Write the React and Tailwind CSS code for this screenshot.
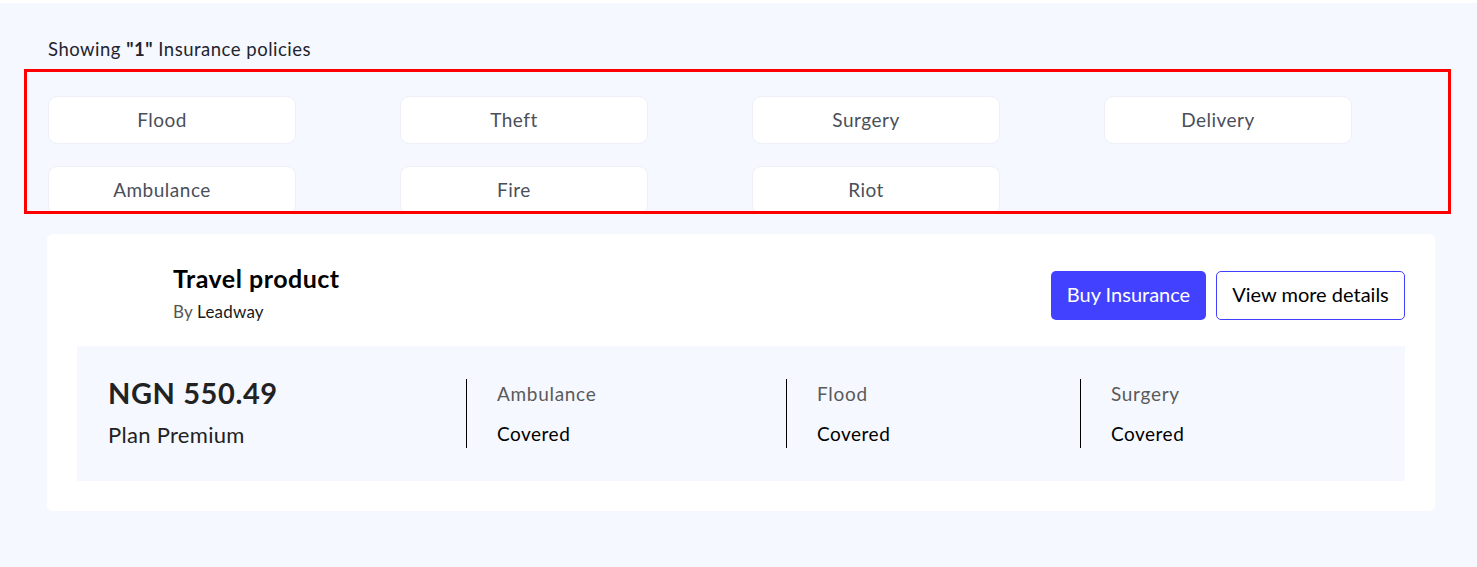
export default function App() {
  const chips = ["Flood", "Theft", "Surgery", "Delivery", "Ambulance", "Fire", "Riot"];
  const covers = [
    { name: "Ambulance", w: "w-[320px]" },
    { name: "Flood", w: "w-[294px]" },
    { name: "Surgery", w: "w-[294px]" },
  ];
  return (
    <div
      className="min-h-[567px] bg-[#f5f8fe] border-t-[3px] border-white"
      style={{ fontFamily: "Lato, 'Noto Sans', sans-serif" }}
    >
      <p className="ml-[48px] mt-[34px] text-[18.5px] leading-[24px] tracking-[0.5px] text-[#1f2430]">
        Showing <span className="font-bold">"1"</span> Insurance policies
      </p>

      <div className="ml-[24px] mt-[8px] w-[1427px] h-[145px] border-[3px] border-[#ff0000] overflow-hidden pl-[21px] pt-[24px]">
        <div className="grid grid-cols-[repeat(4,248px)] gap-x-[104px] gap-y-[22px]">
          {chips.map((c) => (
            <div
              key={c}
              className="h-[48px] bg-white rounded-[9px] border border-[#edf0f6] flex items-center justify-center pr-[20px] text-[19px] tracking-[0.5px] text-[#4a4f5a]"
            >
              {c}
            </div>
          ))}
        </div>
      </div>

      <div className="ml-[47px] mt-[20px] w-[1388px] bg-white rounded-[6px] px-[30px] pt-[29px] pb-[30px]">
        <div className="flex items-start justify-between">
          <div className="ml-[96px]">
            <div className="text-[25px] leading-[30px] font-bold tracking-[0.5px] text-black">Travel product</div>
            <div className="mt-[7px] text-[17px] leading-[24px] tracking-[0.2px] text-[#555]">
              By <span className="text-[#1a1a1a]">Leadway</span>
            </div>
          </div>
          <div className="mt-[8px] flex gap-[10px]">
            <button className="h-[49px] w-[155px] rounded-[5px] bg-[#4141ff] text-white text-[20px] pb-[3px]">
              Buy Insurance
            </button>
            <button className="h-[49px] w-[189px] rounded-[5px] border border-[#4141ff] bg-white text-black text-[20px] pb-[3px]">
              View more details
            </button>
          </div>
        </div>

        <div className="mt-[22px] bg-[#f5f8fe] pl-[31px] py-[33px] flex">
          <div className="w-[358px] h-[69px]">
            <div className="-mt-[3px] text-[29px] leading-[34px] font-bold tracking-[0.6px] text-[#222]">NGN 550.49</div>
            <div className="mt-[12px] text-[22px] leading-[26px] tracking-[0.3px] text-[#222]">Plan Premium</div>
          </div>
          {covers.map((c) => (
            <div key={c.name} className={`${c.w} h-[69px] border-l border-black pl-[30px]`}>
              <div className="mt-[3px] text-[19px] leading-[24px] tracking-[0.7px] text-[#5a5a5a]">{c.name}</div>
              <div className="mt-[16px] text-[19px] leading-[24px] tracking-[0.5px] text-black">Covered</div>
            </div>
          ))}
        </div>
      </div>
    </div>
  );
}
